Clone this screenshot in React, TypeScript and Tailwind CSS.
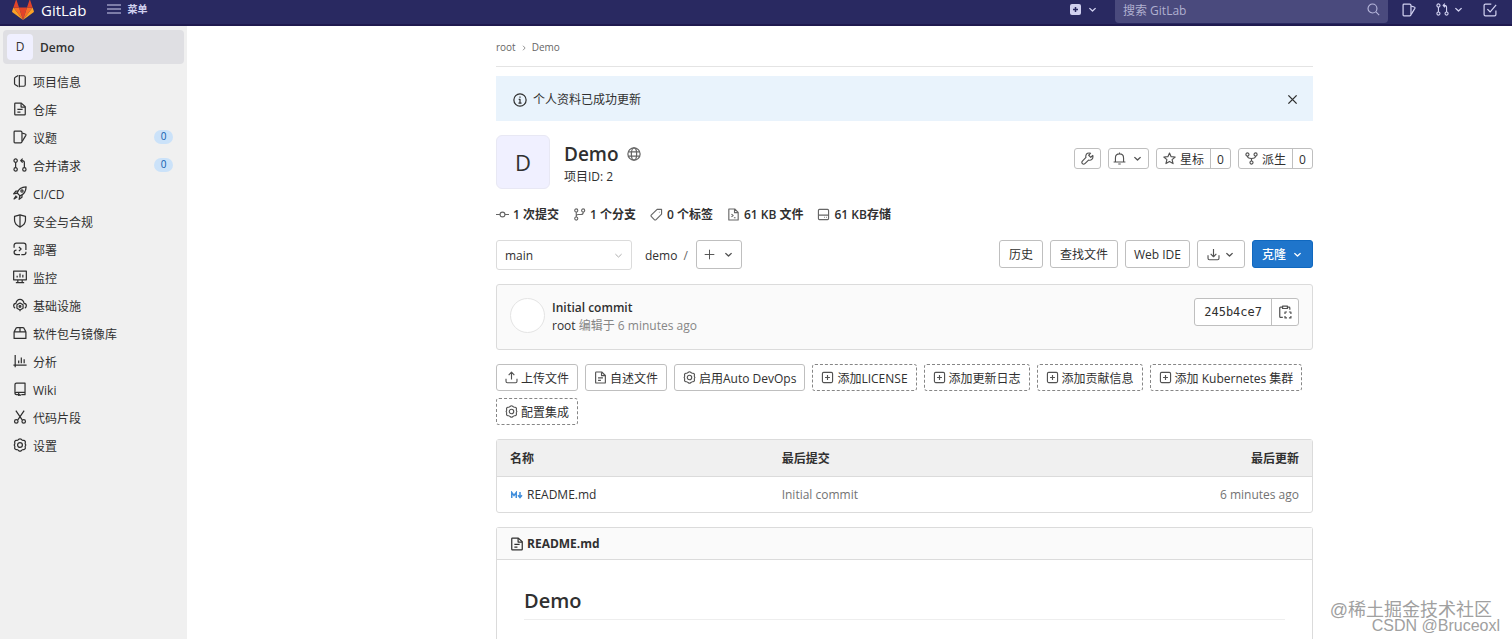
import type { ReactNode } from 'react';

/**
 * 16x16 outline icons, keyed by name
 */
const ICONS: Record<string, ReactNode> = {
  project: (
    <>
      <path d="M6 14.2 2.600 12.200c-.5-.3-.85-.8-.85-1.400V5.200c0-.6.300-1.100.850-1.400L6 1.800" />
      <path d="M7.250 1v14M7.500 2h4.750c1 0 1.750.75 1.750 1.750v8.500c0 1-.75 1.750-1.750 1.750H7.500" />
    </>
  ),
  doc: (
    <>
      <path d="M2 2v12c0 .4.350.75.75.75h10.500c.4 0 .75-.35.75-.75V5.500L9.500 1.250H2.750c-.4 0-.75.350-.75.75z" />
      <path d="M9.250 1.500V5.750h4.500M5 8.500h6M5 11.500h3.500" />
    </>
  ),
  issues: (
    <>
      <path d="M2.250 1.250h6.500c.8 0 1.500.7 1.500 1.500v10.500c0 .8-.7 1.500-1.500 1.500h-6.500c-.6 0-1-.4-1-1V2.250c0-.6.400-1 1-1z" />
      <path d="m10.500 3.500 3.500 1.100c.7.200 1 .9.700 1.500l-4.200 6.900" />
    </>
  ),
  merge: (
    <>
      <circle cx="3" cy="3" r="1.900" />
      <circle cx="3" cy="13" r="1.900" />
      <circle cx="13" cy="13" r="1.900" />
      <path d="M3 5v6M13 11V5.500c0-1.400-1.100-2.500-2.500-2.500H9M11 .75 8.750 3 11 5.250" />
    </>
  ),
  rocket: (
    <>
      <path d="M4.750 8C6 4.250 9.500 1.250 15 1c-.25 5.500-3.250 9-7 10.250z" />
      <path d="M6 5.750H3.250L.75 9l4-.75M10.250 10v2.750L7 15.250 7.750 11.250M3.750 11l-2.500 3.750L5 12.250" />
      <circle cx="10.250" cy="5.750" r="1.300" />
    </>
  ),
  shield: <path d="M8 1 1.750 2.750V7.250c0 3.600 2.500 6 6.250 7.750 3.750-1.750 6.250-4.150 6.250-7.750V2.750zM8 1.250v13.500" />,
  deploy: (
    <>
      <path d="M1.250 6.500V3.750c0-1.400 1.100-2.500 2.500-2.500h8.500c1.400 0 2.500 1.100 2.500 2.500V9M14.750 11v1c0 1.400-1.100 2.500-2.500 2.500H9.500M8 14.500H4.250c-1.700 0-3-1.100-3-2.750s1.200-2.500 2.750-2.500" />
      <path d="m6.750 5.500 2.500 2.500-2.500 2.500" />
    </>
  ),
  monitor: (
    <path d="M.75 1.250h14.500v10H.75zM4.750 6.500v2M8 4v4.500M11.250 5.500v3M5.500 11.500v2.750M10.500 11.500v2.750M3.250 14.500h9.500" />
  ),
  cloud: (
    <>
      <path d="M2.500 11.500C1.300 11 .75 10 .75 8.900c0-1.500 1.100-2.700 2.600-2.800C3.900 3.300 5.700 1.500 8 1.500s4.100 1.800 4.650 4.600c1.500.1 2.600 1.300 2.600 2.800 0 1.100-.55 2.100-1.750 2.600" />
      <path d="m8 5.750 3.500 2v4l-3.500 2-3.500-2v-4zM8 13.750V15" />
      <circle cx="8" cy="9.750" r="1" />
    </>
  ),
  package: <path d="M1.250 6.750h13.500v7.500H1.250zM1.250 6.750 3.500 2.500c.3-.5.800-.75 1.300-.75h6.400c.5 0 1 .250 1.300.75l2.250 4.250M8 1.750v5" />,
  chart: <path d="M2.500 1v14M.5 12.750h15M6.500 7.500v3M9.500 4v6.500M12.750 6v4.500" />,
  book: <path d="M4 1.250h9.750v10.500H4c-1 0-1.750.6-1.750 1.500s.75 1.250 1.750 1.250h2M2.250 13V3c0-1 .75-1.750 1.750-1.750M13.750 11.750v2.750H9.500M6.500 12.500v3l1.250-1 1.250 1" />,
  scissors: (
    <>
      <path d="m3.250.75 7.250 10.500M12.750.75 5.500 11.250" />
      <circle cx="3.750" cy="13" r="2" />
      <circle cx="12.250" cy="13" r="2" />
    </>
  ),
  gear: (
    <>
      <path d="M6.600 1.500c.8-.7 2-.7 2.800 0l1 .9c.2.200.5.300.8.300l1.300.1c1 .1 1.800 1.100 1.600 2.100l-.2 1.300c0 .3 0 .6.200.8l.5 1-.500 1c-.2.200-.2.500-.2.800l.2 1.300c.2 1-.6 2-1.600 2.100l-1.300.1c-.3 0-.6.100-.8.300l-1 .9c-.8.700-2 .7-2.800 0l-1-.9c-.2-.2-.5-.3-.8-.3l-1.300-.1c-1-.1-1.800-1.100-1.600-2.100l.2-1.300c0-.3 0-.6-.2-.8l-.5-1 .5-1c.2-.2.200-.5.200-.8l-.2-1.300c-.2-1 .6-2 1.600-2.100l1.300-.1c.3 0 .6-.1.800-.3z" />
      <circle cx="8" cy="8" r="2.750" />
    </>
  ),
  chevron: <path d="m3.500 6 4.500 4.250L12.500 6" />,
  chevronRight: <path d="M6 3.500 10.250 8 6 12.500" />,
  search: (
    <>
      <circle cx="6.750" cy="6.750" r="5.500" />
      <path d="m11 11 4 4" />
    </>
  ),
  todo: <path d="M9.500 1.250H2.750c-.8 0-1.500.7-1.500 1.500v10.500c0 .8.700 1.500 1.500 1.500h10.500c.8 0 1.500-.7 1.500-1.500V8.500M5 7l3.250 3.250 6.750-8" />,
  info: (
    <>
      <circle cx="8" cy="8" r="7" />
      <path d="M6.500 7.250H8v4M6.250 11.500h3.500M8 4v1.500" />
    </>
  ),
  close: <path d="m2 2 12 12M14 2 2 14" />,
  globe: (
    <>
      <circle cx="8" cy="8" r="7" />
      <ellipse cx="8" cy="8" rx="3" ry="7" />
      <path d="M1.500 5.500h13M1.500 10.500h13" />
    </>
  ),
  commit: (
    <>
      <circle cx="8" cy="8" r="3" />
      <path d="M0 8h5M11 8h5" />
    </>
  ),
  branch: (
    <>
      <circle cx="4" cy="3" r="1.900" />
      <circle cx="4" cy="13" r="1.900" />
      <circle cx="12.500" cy="3" r="1.900" />
      <path d="M4 5v6M12.500 5v.5c0 1.500-1 2.500-2.500 2.500H6.500C5 8 4 9 4 10.500" />
    </>
  ),
  tag: (
    <>
      <path d="M8.750 1.750h5.500V7.500L7.500 14.250c-.7.700-1.500.7-2.200 0L1.750 10.700c-.7-.7-.7-1.500 0-2.200z" />
      <path d="M11 5.250h.75" />
    </>
  ),
  code: (
    <>
      <path d="M2.250 1.250H9.500l4.250 4.250v9.250H2.250zM9.250 1.500v4.250h4.250" />
      <path d="m5.500 7.500 2 1.750-2 1.750M8.500 12h2" />
    </>
  ),
  disk: <path d="M3 1.750h10c.7 0 1.250.550 1.250 1.250v10c0 .7-.55 1.250-1.250 1.250H3c-.7 0-1.250-.55-1.250-1.250V3c0-.7.550-1.250 1.250-1.250zM1.750 8.750h12.500M9 11.500h.75M11.500 11.500h.75" />,
  wrench: (
    <path d="M14.500 4.250 12 6.500 9.500 4l2.250-2.500C9 .5 6.500 2 6 4.500c-.2.900-.1 1.600.1 2.200L1.700 11.200c-.9.900-.9 2.200 0 3.100s2.200.9 3.100 0l4.500-4.400c3 1 6.200-1.400 5.200-5.650z" />
  ),
  bell: <path d="M8 .75v1.500M3 12V7.250c0-3 2-5 5-5s5 2 5 5V12M.75 12.250h14.500M6.500 14.750h3" />,
  star: <path d="m8 1.250 2 4.500 5 .4-3.800 3.200 1.200 4.900L8 11.600l-4.400 2.650 1.200-4.900L1 6.150l5-.4z" />,
  fork: (
    <>
      <circle cx="3" cy="3" r="1.900" />
      <circle cx="13" cy="3" r="1.900" />
      <circle cx="8" cy="13" r="1.900" />
      <path d="M3 5c0 2.250 1.500 3 5 3s5-.75 5-3M8 8v3" />
    </>
  ),
  plus: <path d="M8 1v14M1 8h14" />,
  download: <path d="M1.250 9v3.750c0 1 .75 1.750 1.750 1.750h10c1 0 1.750-.75 1.750-1.750V9M8 1.250v9.500M4.500 7.250 8 10.750l3.500-3.500" />,
  upload: <path d="M1.250 9.500v3.250c0 1 .75 1.750 1.750 1.750h10c1 0 1.750-.75 1.750-1.750V9.500M8 10.500V1.500M4.500 5 8 1.500 11.500 5" />,
  copy: (
    <>
      <path d="M5.500 14.250H3c-.6 0-1-.4-1-1V3.500c0-.6.400-1 1-1h2M11 2.500h1.500c.6 0 1 .4 1 1V5.500M5.250 1.250h5.500V4h-5.500z" />
      <path d="M8 10.250V8h2.250M12.500 8h2.250v2.250M14.750 12.500v2.250H12.500M10.250 14.750H8V12.500" />
    </>
  ),
  plusSquare: <path d="M3.250 1.750h9.500c.8 0 1.500.7 1.500 1.500v9.500c0 .8-.7 1.500-1.500 1.500h-9.500c-.8 0-1.500-.7-1.500-1.500v-9.500c0-.8.700-1.500 1.500-1.500zM8 5v6M5 8h6" />,
};

function Icon({ name, className = 'size-[14px]' }: { name: string; className?: string }) {
  return (
    <svg
      viewBox="0 0 16 16"
      fill="none"
      stroke="currentColor"
      strokeWidth="1.4"
      strokeLinejoin="round"
      aria-hidden="true"
      className={`shrink-0 ${className}`}
    >
      {ICONS[name]}
    </svg>
  );
}

const MENU = [
  { icon: 'project', label: '项目信息' },
  { icon: 'doc', label: '仓库' },
  { icon: 'issues', label: '议题', count: 0 },
  { icon: 'merge', label: '合并请求', count: 0 },
  { icon: 'rocket', label: 'CI/CD' },
  { icon: 'shield', label: '安全与合规' },
  { icon: 'deploy', label: '部署' },
  { icon: 'monitor', label: '监控' },
  { icon: 'cloud', label: '基础设施' },
  { icon: 'package', label: '软件包与镜像库' },
  { icon: 'chart', label: '分析' },
  { icon: 'book', label: 'Wiki' },
  { icon: 'scissors', label: '代码片段' },
  { icon: 'gear', label: '设置' },
];

const STATS = [
  { icon: 'commit', label: '1 次提交' },
  { icon: 'branch', label: '1 个分支' },
  { icon: 'tag', label: '0 个标签' },
  { icon: 'code', label: '61 KB 文件' },
  { icon: 'disk', label: '61 KB存储' },
];

const QUICK_ACTIONS = [
  { icon: 'upload', label: '上传文件' },
  { icon: 'doc', label: '自述文件' },
  { icon: 'gear', label: '启用Auto DevOps' },
  { icon: 'plusSquare', label: '添加LICENSE', dashed: true },
  { icon: 'plusSquare', label: '添加更新日志', dashed: true },
  { icon: 'plusSquare', label: '添加贡献信息', dashed: true },
  { icon: 'plusSquare', label: '添加 Kubernetes 集群', dashed: true },
  { icon: 'gear', label: '配置集成', dashed: true },
];

function Logo() {
  return (
    <svg viewBox="0 0 22 21" className="h-[21px] w-[22px] shrink-0" aria-hidden="true">
      <path d="M11 21 15 8.500H7z" fill="#e24329" />
      <path d="M11 21 7 8.500H1.400z" fill="#fc6d26" />
      <path d="M1.400 8.500.1 12.300c-.1.400 0 .8.300 1L11 21z" fill="#fca326" />
      <path d="M1.400 8.500H7L4.600 1.200c-.1-.4-.7-.4-.8 0z" fill="#e24329" />
      <path d="m11 21 4-12.500h5.600z" fill="#fc6d26" />
      <path d="m20.600 8.500 1.300 3.800c.1.400 0 .8-.3 1L11 21z" fill="#fca326" />
      <path d="M20.600 8.500H15l2.400-7.300c.1-.4.700-.4.800 0z" fill="#e24329" />
    </svg>
  );
}

function TopBar() {
  return (
    <header className="flex h-[26px] items-start border-b-2 border-[#1f1a4f] bg-[#292961] pr-[15px] pl-3 text-[#d1d1f0]">
      <div className="flex h-[19px] items-center">
        <a href="#" className="flex items-center gap-[7px] text-[15px] font-medium text-white">
          <Logo />
          GitLab
        </a>
        <button type="button" className="ml-[21px] flex items-center gap-1.5 text-[10px] font-semibold">
          <svg viewBox="0 0 14 10" className="h-[10px] w-[14px]" stroke="currentColor" aria-hidden="true">
            <path d="M0 1h14M0 5h14M0 9h14" />
          </svg>
          菜单
        </button>
      </div>
      <div className="ml-auto flex items-start">
        <button type="button" aria-label="新建" className="mr-[17px] flex h-[19px] items-center gap-[6px]">
          <svg viewBox="0 0 11 11" className="size-[11px]" aria-hidden="true">
            <rect width="11" height="11" rx="2" fill="currentColor" />
            <path d="M5.500 3v5M3 5.500h5" stroke="#292961" strokeWidth="1.500" />
          </svg>
          <Icon name="chevron" className="size-[11px] stroke-2" />
        </button>
        <div className="flex h-[23px] w-[273px] items-start rounded-b-sm bg-[#4a4a7d] px-2">
          <input
            type="text"
            aria-label="搜索 GitLab"
            placeholder="搜索 GitLab"
            className="h-5 min-w-0 flex-1 bg-transparent outline-none placeholder:text-[#b0b0d0]"
          />
          <Icon name="search" className="mt-[3px] size-[13px] text-[#b8b8dc]" />
        </div>
        <nav className="ml-[14px] flex h-[19px] items-center">
          <a href="#" aria-label="议题">
            <Icon name="issues" />
          </a>
          <a href="#" aria-label="合并请求" className="ml-5 flex items-center gap-1">
            <Icon name="merge" className="size-[13px]" />
            <Icon name="chevron" className="size-[11px] stroke-2" />
          </a>
          <a href="#" aria-label="待办事项" className="ml-[19px]">
            <Icon name="todo" />
          </a>
        </nav>
      </div>
    </header>
  );
}

function Sidebar() {
  return (
    <aside className="w-[187px] shrink-0 bg-[#f0f0f0] px-[3px] pt-1">
      <a href="#" className="flex h-[34px] items-center gap-[7px] rounded-sm bg-[#dfdfe3] px-1 text-[#303030]">
        <span className="flex size-[26px] items-center justify-center rounded-sm bg-[#f0f0ff]">D</span>
        <span className="pt-0.5 font-semibold">Demo</span>
      </a>
      <nav className="mt-[3px]">
        {MENU.map((item) => (
          <a key={item.label} href="#" className="flex h-7 items-center gap-[6px] pr-[11px] pl-[10px] text-[#303030]">
            <Icon name={item.icon} />
            <span className="pt-[3px]">{item.label}</span>
            {item.count !== undefined && (
              <span className="ml-auto flex h-[14px] w-[19px] items-center justify-center rounded-full bg-[#cbe2f9] text-[10px] text-[#0b5cad]">
                {item.count}
              </span>
            )}
          </a>
        ))}
      </nav>
    </aside>
  );
}

function CountButton({ icon, label, count }: { icon: string; label: string; count: number }) {
  return (
    <div className="flex h-[21px] rounded-[3px] border border-[#bfbfbf]">
      <button type="button" className="flex items-center gap-1 px-1.5">
        <Icon name={icon} className="size-[13px] text-[#525252]" />
        <span className="pt-0.5">{label}</span>
      </button>
      <a href="#" className="flex w-[20px] items-center justify-center border-l border-[#bfbfbf] pt-0.5">
        {count}
      </a>
    </div>
  );
}

function ProjectHeader() {
  return (
    <section className="mt-[14px] flex items-start">
      <div className="flex size-[54px] items-center justify-center rounded-md border border-[#e8e8f4] bg-[#f0f0ff] pt-0.5 text-[22px]">
        D
      </div>
      <div className="ml-[14px] pt-[6px]">
        <h1 className="flex items-center gap-2 text-[19px] leading-[26px] font-semibold">
          Demo
          <Icon name="globe" className="size-[14px] text-[#666]" />
        </h1>
        <p className="leading-5">项目ID: 2</p>
      </div>
      <div className="ml-auto flex gap-[7px] pt-[13px]">
        <button
          type="button"
          aria-label="管理"
          className="flex h-[21px] w-[27px] items-center justify-center rounded-[3px] border border-[#bfbfbf] text-[#525252]"
        >
          <Icon name="wrench" className="size-[13px]" />
        </button>
        <button
          type="button"
          aria-label="通知设置"
          className="flex h-[21px] w-[41px] items-center justify-center gap-1.5 rounded-[3px] border border-[#bfbfbf] text-[#525252]"
        >
          <Icon name="bell" className="size-[13px]" />
          <Icon name="chevron" className="size-[11px] stroke-2" />
        </button>
        <CountButton icon="star" label="星标" count={0} />
        <CountButton icon="fork" label="派生" count={0} />
      </div>
    </section>
  );
}

const BUTTON = 'flex h-7 items-center rounded-[3px] border border-[#bfbfbf]';

function TreeControls() {
  return (
    <section className="mt-4 flex items-start">
      <div className="grid w-[136px] items-center">
        <select
          aria-label="切换分支"
          className="col-start-1 row-start-1 h-[30px] appearance-none rounded-[3px] border border-[#dbdbdb] bg-white px-2 pt-0.5 outline-none"
        >
          <option>main</option>
        </select>
        <Icon
          name="chevron"
          className="pointer-events-none col-start-1 row-start-1 mr-[8px] size-[11px] justify-self-end text-[#aaa]"
        />
      </div>
      <div className="ml-[13px] flex h-[30px] items-center gap-[6px] pt-0.5">
        <a href="#">demo</a>
        <span className="text-[#666]">/</span>
      </div>
      <button
        type="button"
        aria-label="添加到目录树"
        className="ml-[8px] flex h-[29px] w-[46px] items-center justify-center gap-2 rounded-[3px] border border-[#bfbfbf] text-[#525252]"
      >
        <Icon name="plus" className="size-[11px]" />
        <Icon name="chevron" className="size-[11px] stroke-2" />
      </button>
      <div className="ml-auto flex gap-[7px]">
        <button type="button" className={`${BUTTON} px-[9px]`}>
          <span className="pt-0.5">历史</span>
        </button>
        <button type="button" className={`${BUTTON} px-[9px]`}>
          <span className="pt-0.5">查找文件</span>
        </button>
        <button type="button" className={`${BUTTON} px-2`}>
          <span className="pt-0.5">Web IDE</span>
        </button>
        <button type="button" aria-label="下载" className={`${BUTTON} gap-1 px-[9px] text-[#525252]`}>
          <Icon name="download" className="size-[13px]" />
          <Icon name="chevron" className="size-[11px] stroke-2" />
        </button>
        <button
          type="button"
          className="flex h-7 items-center gap-[6px] rounded-[3px] border border-[#1068bf] bg-[#1f75cb] px-[9px] font-medium text-white"
        >
          <span className="pt-0.5">克隆</span>
          <Icon name="chevron" className="size-[11px] stroke-2" />
        </button>
      </div>
    </section>
  );
}

function LastCommit() {
  return (
    <section className="mt-[14px] flex h-[66px] items-start rounded-[3px] border border-[#dbdbdb] bg-[#fafafa] px-[13px] pt-[13px]">
      <div className="size-[35px] rounded-full border border-[#e4e4e4] bg-white" />
      <div className="ml-[7px] pt-px leading-[18px]">
        <a href="#" className="block font-semibold">Initial commit</a>
        <p className="text-[#868686]">
          <a href="#" className="text-[#303030]">root</a> 编辑于 6 minutes ago
        </p>
      </div>
      <div className="ml-auto flex h-[28px] rounded-[3px] border border-[#bfbfbf] bg-white">
        <span className="flex items-center px-[9px] font-['DejaVu_Sans_Mono',monospace]">245b4ce7</span>
        <button
          type="button"
          aria-label="复制提交 SHA"
          className="flex w-[27px] items-center justify-center border-l border-[#bfbfbf] text-[#525252]"
        >
          <Icon name="copy" />
        </button>
      </div>
    </section>
  );
}

function FileTable() {
  return (
    <div className="mt-[14px] rounded-[3px] border border-[#dbdbdb]">
      <table className="w-full table-fixed text-left">
        <thead className="bg-[#f0f0f0]">
          <tr className="h-9 border-b border-[#dbdbdb]">
            <th className="w-1/3 px-[13px] pt-[3px] font-bold">名称</th>
            <th className="px-[13px] pt-[3px] font-bold">最后提交</th>
            <th className="w-1/4 px-[13px] pt-[3px] text-right font-bold">最后更新</th>
          </tr>
        </thead>
        <tbody>
          <tr className="h-9">
            <td className="px-[13px] pt-0.5">
              <a href="#" className="flex items-center gap-1">
                <svg viewBox="0 0 13 8" className="h-2 w-[13px]" fill="none" stroke="#428fdc" strokeWidth="1.500" aria-hidden="true">
                  <path d="M1.750 7V1.500l2.250 3 2.250-3V7M10 1v5M8 4.250l2 2.250 2-2.250" />
                </svg>
                README.md
              </a>
            </td>
            <td className="px-[13px] pt-0.5 text-[#737373]">Initial commit</td>
            <td className="px-[13px] pt-0.5 text-right text-[#737373]">6 minutes ago</td>
          </tr>
        </tbody>
      </table>
    </div>
  );
}

export default function App() {
  return (
    <div className="relative flex min-h-screen flex-col bg-white font-['Open_Sans','Noto_Sans_CJK_SC',sans-serif] text-xs text-[#303030]">
      <TopBar />
      <div className="flex flex-1">
        <Sidebar />
        <div className="flex min-w-0 flex-1 pl-[110px]">
          <main className="mx-auto flex w-full max-w-[817px] flex-col">
            {/* Breadcrumbs */}
            <nav className="flex h-[41px] items-center gap-1 border-b border-[#e4e4e4] pt-[3px] text-[10px] text-[#666]">
              <a href="#">root</a>
              <Icon name="chevronRight" className="size-[8px]" />
              <a href="#">Demo</a>
            </nav>

            {/* Flash message */}
            <div className="mt-[9px] flex h-[45px] items-center gap-1.5 bg-[#e9f3fc] pt-0.5 pr-[15px] pl-[17px]">
              <Icon name="info" className="size-[14px]" />
              <p>个人资料已成功更新</p>
              <button type="button" aria-label="关闭" className="ml-auto">
                <Icon name="close" className="size-[11px] stroke-2" />
              </button>
            </div>

            <ProjectHeader />

            {/* Project stats */}
            <ul className="mt-[15px] flex h-5 items-center gap-[14px] font-semibold">
              {STATS.map((stat) => (
                <li key={stat.label}>
                  <a href="#" className="flex items-center gap-1">
                    <Icon name={stat.icon} className="size-[13px] text-[#666]" />
                    <span className="pt-0.5">{stat.label}</span>
                  </a>
                </li>
              ))}
            </ul>

            <TreeControls />
            <LastCommit />

            {/* Quick actions */}
            <div className="mt-[14px] flex flex-wrap gap-[7px]">
              {QUICK_ACTIONS.map((action) => (
                <button
                  key={action.label}
                  type="button"
                  className={`flex h-[27px] items-center gap-[3px] rounded-[3px] border px-2 ${
                    action.dashed ? 'border-dashed border-[#868686]' : 'border-[#bfbfbf]'
                  }`}
                >
                  <Icon name={action.icon} className="size-[13px] text-[#525252]" />
                  <span className="pt-0.5">{action.label}</span>
                </button>
              ))}
            </div>

            <FileTable />

            {/* Readme */}
            <article className="mt-[14px] flex-1 rounded-t-[3px] border border-b-0 border-[#dbdbdb]">
              <h2 className="flex h-8 items-center gap-[3px] border-b border-[#dbdbdb] bg-[#fafafa] px-[13px] font-bold">
                <Icon name="doc" />
                README.md
              </h2>
              <div className="px-[27px] pt-[27px]">
                <h1 className="border-b border-[#eee] pb-1 text-xl leading-[28px] font-semibold">Demo</h1>
              </div>
            </article>
          </main>
        </div>
      </div>

      {/* Watermark */}
      <div className="pointer-events-none absolute right-3 bottom-[5px] text-right font-['Liberation_Sans','Noto_Sans_CJK_SC',sans-serif] text-[#a0a0a0]">
        <p className="pr-2 text-lg leading-4">@稀土掘金技术社区</p>
        <p className="text-base leading-4">CSDN @Bruceoxl</p>
      </div>
    </div>
  );
}
